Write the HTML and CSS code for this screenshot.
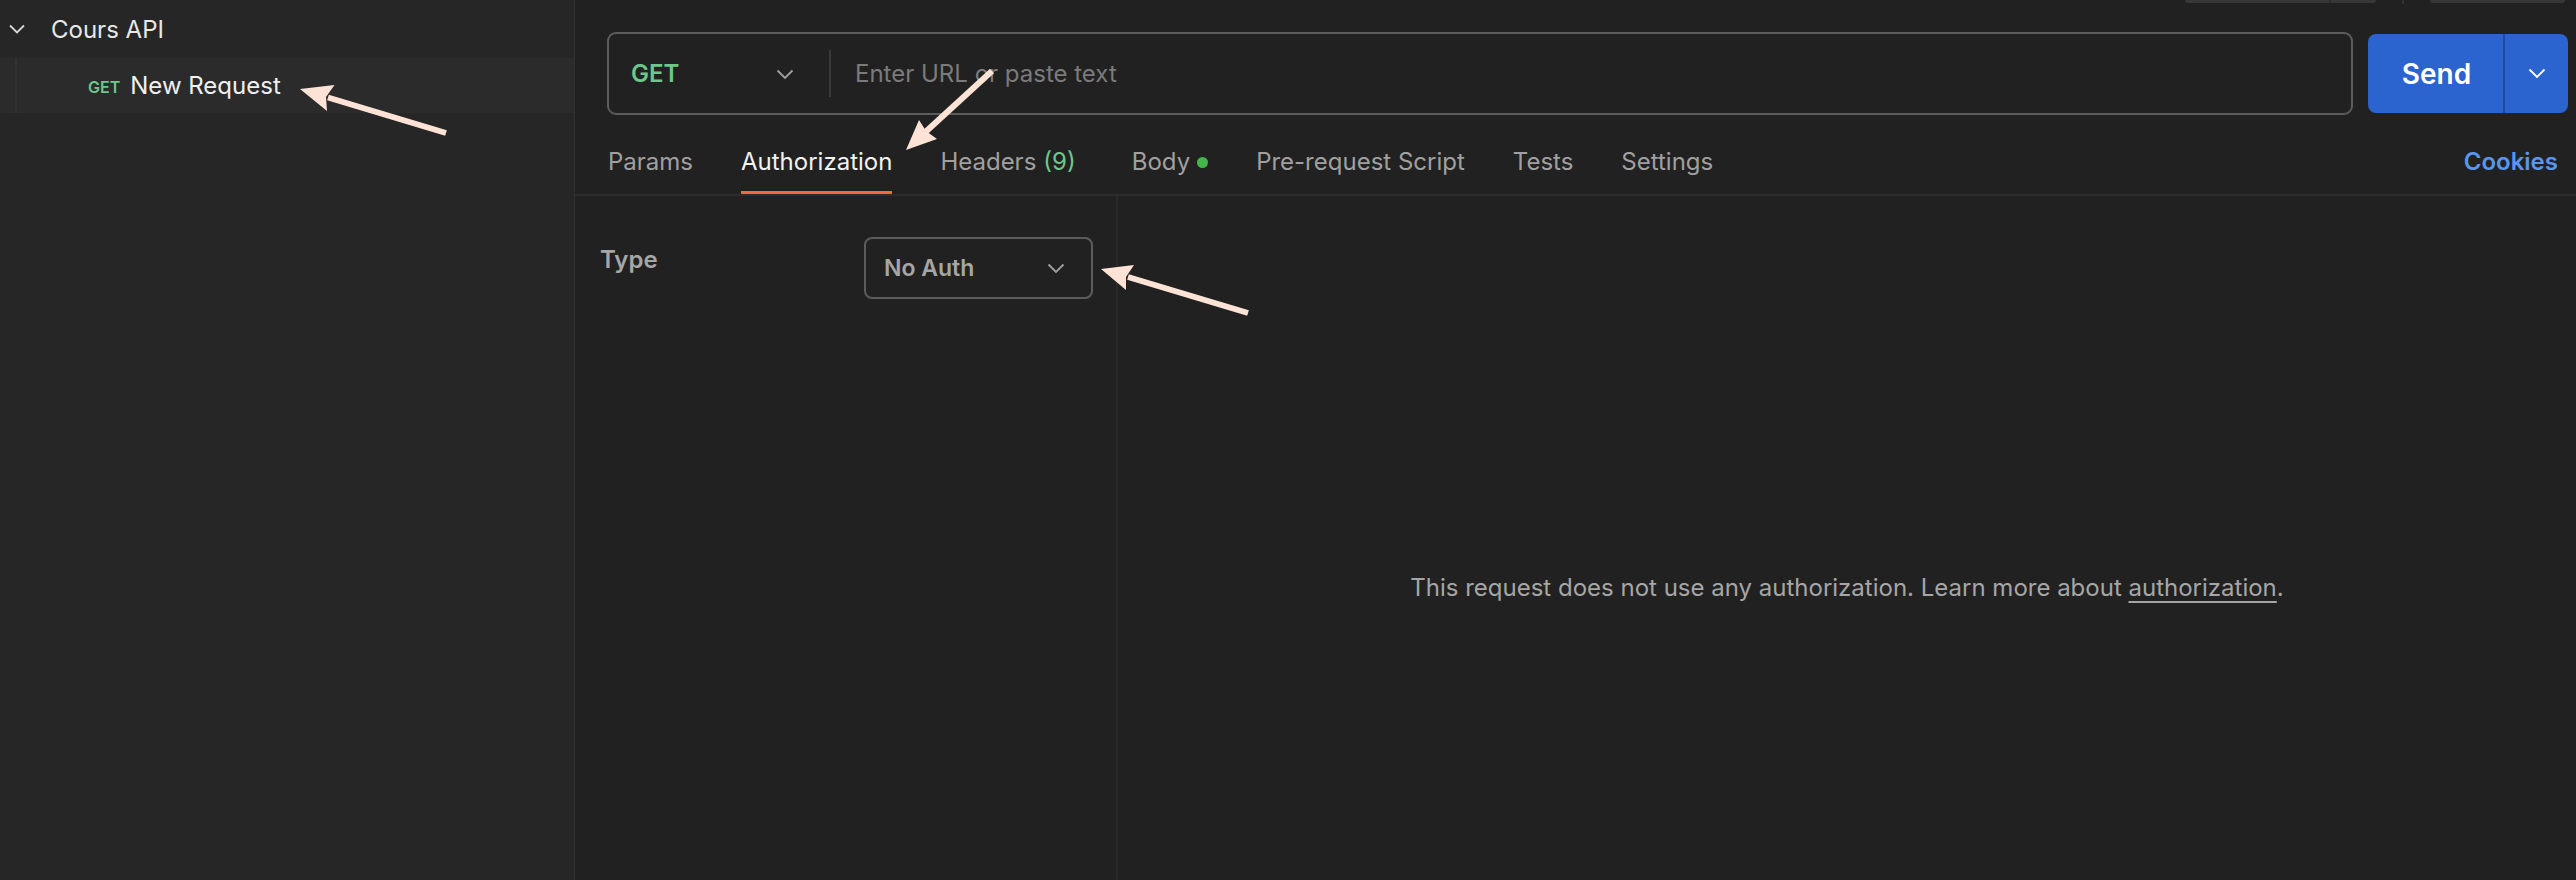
FILE: index.html
```html
<!DOCTYPE html>
<html lang="en">
<head>
<meta charset="utf-8">
<title>Cours API - New Request</title>
<link rel="stylesheet" href="styles.css">
</head>
<body>
<div class="app">
  <aside class="sidebar">
    <div class="tree-row collection">
      <svg class="chev" width="16" height="10" viewBox="0 0 16 10"><path d="M1 1.5 L8 8.5 L15 1.5" fill="none" stroke="#d8d8d8" stroke-width="1.8"/></svg>
      <span class="coll-name">Cours API</span>
    </div>
    <div class="tree-row request selected">
      <span class="indent"></span>
      <span class="method-sm">GET</span>
      <span class="req-name">New Request</span>
    </div>
  </aside>
  <main class="main">
    <div class="topstrip">
      <div class="ghost-btn split"><span class="ghost-main"></span><span class="ghost-drop"></span></div>
      <span class="ghost-sep"></span>
      <div class="ghost-btn single"></div>
    </div>
    <div class="urlrow">
      <div class="urlbox">
        <div class="method">
          <span class="method-text">GET</span>
          <svg class="chev-md" width="18" height="11" viewBox="0 0 18 11"><path d="M1.5 1.5 L9 9 L16.5 1.5" fill="none" stroke="#a0a0a0" stroke-width="1.8"/></svg>
        </div>
        <span class="url-div"></span>
        <span class="placeholder">Enter URL or paste text</span>
      </div>
      <div class="send">
        <span class="send-label">Send</span>
        <span class="send-drop"><svg width="18" height="11" viewBox="0 0 18 11"><path d="M1.5 1.5 L9 9 L16.5 1.5" fill="none" stroke="#ffffff" stroke-width="1.8"/></svg></span>
      </div>
    </div>
    <nav class="tabs">
      <span class="tab">Params</span>
      <span class="tab active">Authorization</span>
      <span class="tab headers">Headers <span class="count">(9)</span></span>
      <span class="tab">Body <span class="dot"></span></span>
      <span class="tab">Pre-request Script</span>
      <span class="tab">Tests</span>
      <span class="tab">Settings</span>
      <span class="spacer"></span>
      <span class="cookies">Cookies</span>
    </nav>
    <div class="content">
      <section class="auth-left">
        <div class="type-row">
          <span class="type-label">Type</span>
          <div class="select">
            <span class="select-text">No Auth</span>
            <svg width="18" height="11" viewBox="0 0 18 11"><path d="M1.5 1.5 L9 9 L16.5 1.5" fill="none" stroke="#a0a0a0" stroke-width="1.8"/></svg>
          </div>
        </div>
      </section>
      <section class="auth-right">
        <p class="msg">This request does not use any authorization. Learn more about <span class="link">authorization</span>.</p>
      </section>
    </div>
  </main>
  <svg class="annot" width="2576" height="880" viewBox="0 0 2576 880">
    <g fill="#fce3d6" stroke="#fce3d6">
      <line x1="446" y1="133" x2="328" y2="97.5" stroke-width="6"/>
      <polygon points="300,89 334.5,85 326,97 327,111" stroke="none"/>
      <line x1="992" y1="71" x2="926" y2="131.5" stroke-width="6"/>
      <polygon points="906,150 919,120 926,131 937,139" stroke="none"/>
      <line x1="1248" y1="313" x2="1128" y2="277" stroke-width="6"/>
      <polygon points="1101,269 1134,265 1126,277 1126,290" stroke="none"/>
    </g>
  </svg>
</div>
</body>
</html>
```

FILE: styles.css
```css
* { box-sizing: border-box; }
html, body { margin: 0; padding: 0; }
body {
  background: #212121;
  font-family: Inter, "Noto Sans", "Liberation Sans", sans-serif;
  color: #e6e6e6;
  overflow: hidden;
}
.app {
  position: relative;
  display: flex;
  width: 2576px;
  height: 880px;
}
.sidebar {
  width: 575px;
  flex: none;
  background: #262626;
  border-right: 1px solid #303030;
}
.tree-row {
  display: flex;
  align-items: center;
  height: 58px;
}
.tree-row.collection { height: 58px; padding-left: 9px; }
.chev { margin-right: 26px; }
.coll-name { font-size: 24px; color: #e8e8e8; }
.tree-row.request { height: 55px; }
.selected { background: #2b2b2b; }
.indent {
  width: 2px;
  height: 100%;
  background: #323232;
  margin-left: 15px;
  margin-right: 71px;
}
.method-sm {
  font-size: 16px;
  font-weight: 600;
  color: #6bc88a;
  margin-right: 10px;
  margin-top: 2px;
}
.req-name { font-size: 24px; color: #f0f0f0; }

.main {
  flex: 1;
  display: flex;
  flex-direction: column;
  min-width: 0;
}
.topstrip {
  height: 32px;
  display: flex;
  justify-content: flex-end;
  align-items: flex-start;
  padding-right: 11px;
  overflow: hidden;
}
.ghost-btn {
  height: 3px;
  background: #373737;
  border-radius: 0 0 6px 6px;
}
.ghost-btn.split { width: 191px; display: flex; justify-content: flex-end; }
.ghost-drop { width: 47px; height: 3px; border-left: 2px solid #2a2a2a; }
.ghost-sep { width: 2px; height: 4px; background: #333333; margin: 0 26px; }
.ghost-btn.single { width: 135px; }

.urlrow {
  display: flex;
  align-items: center;
  padding: 0 8px 0 32px;
  gap: 15px;
  height: 83px;
}
.urlbox {
  flex: 1;
  height: 83px;
  border: 2px solid #5c5c5c;
  border-radius: 9px;
  display: flex;
  align-items: center;
}
.method {
  width: 220px;
  display: flex;
  align-items: center;
  justify-content: space-between;
  padding: 0 35px 0 22px;
}
.method-text { font-size: 24px; font-weight: 600; color: #6bc88a; }
.chev-md { margin-top: 2px; }
.url-div { width: 2px; height: 47px; background: #3a3a3a; }
.placeholder { font-size: 24px; color: #7b7b7b; margin-left: 24px; }
.send {
  width: 200px;
  height: 79px;
  background: #2b64cf;
  border-radius: 8px;
  display: flex;
  align-items: stretch;
  color: #ffffff;
}
.send-label {
  flex: 1;
  display: flex;
  align-items: center;
  justify-content: center;
  font-size: 28px;
  font-weight: 600;
  padding-left: 2px;
}
.send-drop {
  width: 65px;
  border-left: 2px solid #1f4c9e;
  display: flex;
  align-items: center;
  justify-content: center;
}

.tabs {
  display: flex;
  align-items: flex-end;
  height: 81px;
  padding: 0 18px 0 33px;
  gap: 48px;
  border-bottom: 2px solid #2c2c2c;
}
.tab {
  font-size: 24px;
  color: #a0a0a0;
  height: 46px;
  line-height: 27px;
  border-bottom: 3px solid transparent;
  white-space: nowrap;
  display: flex;
  align-items: flex-start;
}
.tab.headers { margin-right: 8px; }
.tab.active { color: #f2f2f2; border-bottom-color: #f26b3a; }
.count { color: #6bc88a; margin-left: 7px; }
.dot {
  width: 11px; height: 11px;
  border-radius: 50%;
  background: #45b54b;
  margin: 9px 0 0 7px;
}
.spacer { flex: 1; }
.cookies {
  font-size: 24px;
  font-weight: 600;
  color: #5a96ee;
  height: 46px;
  line-height: 27px;
}

.content {
  flex: 1;
  display: flex;
}
.auth-left {
  width: 543px;
  flex: none;
  border-right: 2px solid #2a2a2a;
  padding: 41px 0 0 25px;
}
.type-row { display: flex; align-items: flex-start; }
.type-label {
  width: 264px;
  font-size: 24px;
  font-weight: 600;
  color: #a6a6a6;
  line-height: 46px;
}
.select {
  width: 229px;
  height: 62px;
  border: 2px solid #5c5c5c;
  border-radius: 8px;
  display: flex;
  align-items: center;
  justify-content: space-between;
  padding: 0 26px 0 18px;
}
.select-text { font-size: 23px; font-weight: 600; color: #a6a6a6; }
.auth-right {
  flex: 1;
  display: flex;
  justify-content: center;
  padding-top: 377px;
}
.msg {
  margin: 0;
  font-size: 24px;
  line-height: 30px;
  color: #a6a6a6;
  height: 30px;
}
.link { text-decoration: underline; text-underline-offset: 5px; text-decoration-thickness: 2px; }

.annot {
  position: absolute;
  left: 0;
  top: 0;
  pointer-events: none;
}
```
